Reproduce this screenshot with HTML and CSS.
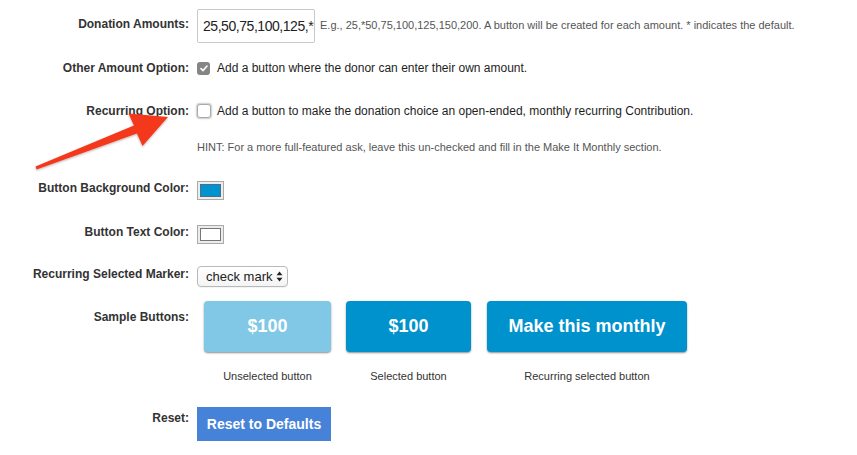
FILE: index.html
```html
<!DOCTYPE html>
<html>
<head>
<meta charset="utf-8">
<link rel="stylesheet" href="styles.css">
</head>
<body>
<div class="form">
  <div class="row r-amounts">
    <div class="lbl">Donation Amounts:</div>
    <div class="ctl inline">
      <input class="textbox" type="text" value="25,50,75,100,125,*50,75,100,125,150,200">
      <span class="hint">E.g., 25,*50,75,100,125,150,200. A button will be created for each amount. * indicates the default.</span>
    </div>
  </div>

  <div class="row r-other">
    <div class="lbl">Other Amount Option:</div>
    <div class="ctl inline">
      <span class="cb checked"><svg width="8" height="7" viewBox="0 0 8 7"><path d="M1 3.6 L3.1 5.6 L7 1" fill="none" stroke="#fff" stroke-width="1.6" stroke-linecap="round" stroke-linejoin="round"/></svg></span>
      <span class="txt">Add a button where the donor can enter their own amount.</span>
    </div>
  </div>

  <div class="row r-recur">
    <div class="lbl">Recurring Option:</div>
    <div class="ctl">
      <div class="inline">
        <span class="cb unchecked"></span>
        <span class="txt">Add a button to make the donation choice an open-ended, monthly recurring Contribution.</span>
      </div>
      <div class="hint hintline">HINT: For a more full-featured ask, leave this un-checked and fill in the Make It Monthly section.</div>
    </div>
  </div>

  <div class="row r-bg">
    <div class="lbl">Button Background Color:</div>
    <div class="ctl"><span class="swatch"><span class="swatch-in blue"></span></span></div>
  </div>

  <div class="row r-fg">
    <div class="lbl">Button Text Color:</div>
    <div class="ctl"><span class="swatch"><span class="swatch-in white"></span></span></div>
  </div>

  <div class="row r-marker">
    <div class="lbl">Recurring Selected Marker:</div>
    <div class="ctl">
      <div class="select">check mark<svg class="updown" width="7" height="11" viewBox="0 0 7 11"><path d="M3.5 0.5 L6.5 4.3 L0.5 4.3 Z M3.5 10.5 L6.5 6.7 L0.5 6.7 Z" fill="#222"/></svg></div>
    </div>
  </div>

  <div class="row r-sample">
    <div class="lbl">Sample Buttons:</div>
    <div class="ctl samples">
      <div class="sample s1">
        <div class="btn unsel">$100</div>
        <div class="cap">Unselected button</div>
      </div>
      <div class="sample s2">
        <div class="btn sel">$100</div>
        <div class="cap">Selected button</div>
      </div>
      <div class="sample s3">
        <div class="btn sel">Make this monthly</div>
        <div class="cap">Recurring selected button</div>
      </div>
    </div>
  </div>

  <div class="row r-reset">
    <div class="lbl">Reset:</div>
    <div class="ctl"><div class="reset">Reset to Defaults</div></div>
  </div>
</div>

<svg class="arrow" width="200" height="200" viewBox="0 0 200 200">
  <defs>
    <filter id="sh" x="-20%" y="-20%" width="140%" height="140%">
      <feDropShadow dx="0" dy="1" stdDeviation="1" flood-color="#000" flood-opacity="0.3"/>
    </filter>
  </defs>
  <polygon filter="url(#sh)" fill="#f4391f" points="35.5,166.4 133.9,125.6 128.5,113.5 168,117 142.5,146 136.9,133.6 36.6,169.6"/>
</svg>
</body>
</html>
```
FILE: styles.css
```css
* { box-sizing: border-box; }
html, body { margin: 0; padding: 0; background: #fff; }
body {
  font-family: "Liberation Sans", Arial, Helvetica, sans-serif;
  color: #222;
  width: 857px;
  height: 455px;
  overflow: hidden;
  position: relative;
}
.form { padding-top: 9px; }
.row { display: flex; align-items: flex-start; }
.lbl {
  width: 189px;
  flex: 0 0 189px;
  text-align: right;
  font-weight: bold;
  font-size: 12px;
  line-height: 16px;
  color: #333;
}
.ctl { margin-left: 8px; }
.inline { display: flex; align-items: center; }

.r-amounts .lbl { padding-top: 7px; }
.textbox {
  width: 118px;
  height: 34px;
  margin: 0;
  border: 1px solid #c8c8c8;
  border-radius: 2px;
  font-family: "Liberation Sans", Arial, Helvetica, sans-serif;
  font-size: 14px;
  letter-spacing: -0.45px;
  line-height: 32px;
  padding: 0 0 0 5px;
  color: #222;
  background: #fff;
  outline: none;
}
.hint { font-size: 11px; color: #555; line-height: 16px; }
.r-amounts .hint { margin-left: 5px; margin-top: -3px; }

.r-other { margin-top: 17px; }
.cb {
  display: inline-flex;
  align-items: center;
  justify-content: center;
  width: 13px;
  height: 13px;
  border-radius: 3px;
  flex: 0 0 13px;
}
.cb.checked { background: #858585; }
.cb.unchecked {
  width: 14px; height: 14px; flex-basis: 14px;
  border: 1px solid #a9a9a9;
  background: #fff;
  box-shadow: 0 0 0 1px #d6d6d6, 0 0 2px 1px rgba(0,0,0,0.15);
}
.txt { font-size: 12px; line-height: 16px; margin-left: 7px; color: #1e1e1e; }
.r-recur .txt { margin-left: 6px; }

.r-recur { margin-top: 27px; }
.hintline { margin-top: 20px; }

.r-bg { margin-top: 25px; }
.swatch {
  display: flex;
  align-items: center;
  justify-content: center;
  width: 27px;
  height: 19px;
  border: 1px solid #aaa;
  background: #ececec;
  margin-top: 1px;
}
.swatch-in { display: block; width: 21px; height: 13px; border: 1px solid #6a6a6a; }
.swatch-in.blue { background: #0093d0; border-color: #4c6f85; }
.swatch-in.white { background: #fff; border-color: #777; }

.r-fg { margin-top: 24px; }
.r-marker { margin-top: 22px; }
.select {
  display: flex;
  align-items: center;
  width: 91px;
  height: 21px;
  border: 1px solid #b9b9b9;
  border-radius: 4px;
  background: linear-gradient(#fff, #f4f4f4);
  font-size: 13px;
  padding-left: 8px;
  color: #222;
  box-shadow: 0 1px 1px rgba(0,0,0,0.05);
}
.updown { margin-left: 4px; }

.r-sample { margin-top: 14px; }
.r-sample .lbl { padding-top: 8px; }
.samples { display: flex; margin-left: 15px; }
.sample { display: flex; flex-direction: column; align-items: center; }
.s2 { margin-left: 15px; }
.s3 { margin-left: 16px; }
.btn {
  height: 51px;
  border-radius: 4px;
  color: #fff;
  font-weight: bold;
  font-size: 18px;
  display: flex;
  align-items: center;
  justify-content: center;
  box-shadow: 0 1px 2px rgba(0,0,0,0.45);
}
.btn.unsel { background: #81c8e6; }
.btn.sel { background: #0092cd; }
.s1 .btn { width: 127px; }
.s2 .btn { width: 125px; }
.s3 .btn { width: 200px; }
.cap { font-size: 11px; color: #333; line-height: 16px; margin-top: 16px; }

.r-reset { margin-top: 23px; }
.r-reset .lbl { padding-top: 3px; }
.reset {
  width: 134px;
  height: 34px;
  background: #4682d8;
  color: #fff;
  font-weight: bold;
  font-size: 14px;
  display: flex;
  align-items: center;
  justify-content: center;
}

.arrow { position: absolute; left: 0; top: 0; pointer-events: none; }
```
